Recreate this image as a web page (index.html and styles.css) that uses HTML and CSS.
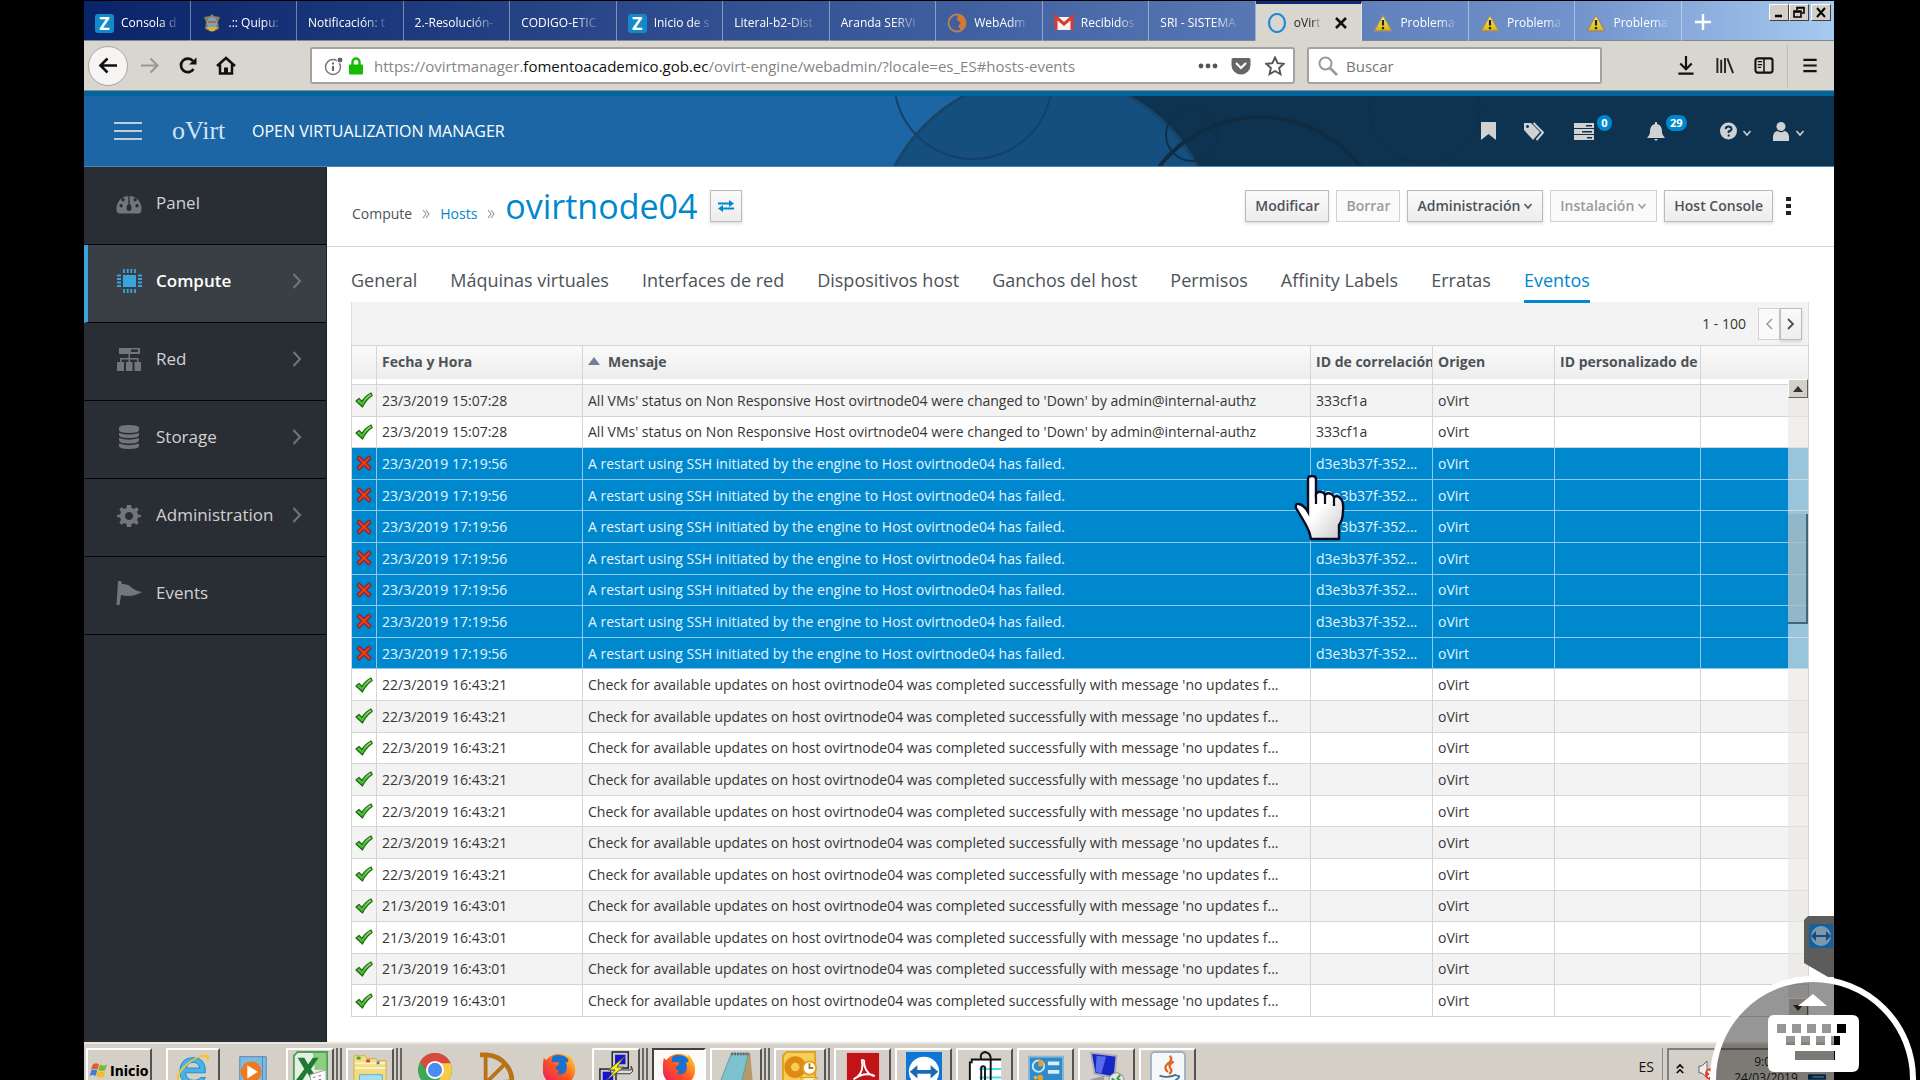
FILE: index.html
```html
<!DOCTYPE html>
<html lang="es">
<head>
<meta charset="utf-8">
<title>oVirt Open Virtualization Manager</title>
<link rel="stylesheet" href="styles.css">
</head>
<body>
<svg class="defs" aria-hidden="true">
  <defs>
    <linearGradient id="leaf" x1="0" y1="0" x2="0" y2="1"><stop offset="0" stop-color="#8fe66a"/><stop offset="1" stop-color="#2fb01a"/></linearGradient>
    <linearGradient id="hand" x1="0" y1="0" x2="1" y2="1"><stop offset=".5" stop-color="#fff"/><stop offset="1" stop-color="#c8c8c8"/></linearGradient>
    <linearGradient id="warnfill" x1="0" y1="0" x2="0" y2="1"><stop offset="0" stop-color="#fff27a"/><stop offset="1" stop-color="#e0b400"/></linearGradient>
    <linearGradient id="fox" x1="0" y1="1" x2="1" y2="0"><stop offset="0" stop-color="#e3126c"/><stop offset=".5" stop-color="#ff5a1f"/><stop offset="1" stop-color="#ffe22e"/></linearGradient>
    <symbol id="ok" viewBox="0 0 18 16"><path d="M1 9 L4 6.500 L7 9.500 C9 6 12 3 16 1 L17.200 3.500 C13 6 10 10 7.500 15 Z" fill="url(#leaf)" stroke="#1b6a12" stroke-width="1.200" stroke-linejoin="round"/></symbol>
    <symbol id="bad" viewBox="0 0 16 16"><path d="M3 1 L8 5.500 L13 1 L15 3.500 L10.500 8 L15 12.500 L13 15 L8 10.500 L3 15 L1 12.500 L5.500 8 L1 3.500 Z" fill="#f03a12" stroke="#7c2a3c" stroke-width="1.200" stroke-linejoin="round"/></symbol>
    <symbol id="warn" viewBox="0 0 20 18"><path d="M10 1 L19 17 H1 Z" fill="url(#warnfill)" stroke="#8f8b86" stroke-width="1.500" stroke-linejoin="round"/><path d="M10 6 V11.500 M10 13 V15.200" stroke="#222" stroke-width="2.200"/></symbol>
    <symbol id="chev" viewBox="0 0 10 16"><path d="M1.500 1 L8 8 L1.500 15" fill="none" stroke="#72767b" stroke-width="2"/></symbol>
    <symbol id="down" viewBox="0 0 10 8"><path d="M1.500 2 L5 6 L8.500 2" fill="none" stroke="currentColor" stroke-width="1.500"/></symbol>
    <symbol id="firefox" viewBox="0 0 38 38"><circle cx="19" cy="20" r="17" fill="url(#fox)"/><path d="M12 6 C18 2 30 5 31 14 C33 24 26 30 19 30 C11 30 8 24 10 17 Z" fill="#1b6fd0"/><path d="M3 7 C6 11 9 10 13 12 C16 11 20 12 19 14 C17 16 15 17 15 19 C19 20 20 22 17 24 C24 27 30 20 26 12 C31 13 29 4 27 2 C34 8 37 16 35 24 C31 38 10 39 4 27 C1 20 2 12 3 7 Z" fill="url(#fox)"/></symbol>
  </defs>
</svg>

<div class="window">
  <header class="tabstrip">
    <nav class="tabs" aria-label="Pestañas">
      <a class="tab" href="#"><span class="zicon">Z</span><span class="tabtext">Consola d</span></a>
      <a class="tab" href="#"><svg class="fav" viewBox="0 0 20 20"><path d="M2 4 L8 3 L10 1 L12 3 L18 4 L16 9 L17 16 L10 19 L3 16 L4 9 Z" fill="#8a7c58"/><ellipse cx="10" cy="10" rx="5" ry="6" fill="#6fa5c9"/><path d="M4 14 L16 14 L12 18 H8 Z" fill="#d9b23a"/><path d="M6 8 H14 V10 H6 Z" fill="#c7622f"/></svg><span class="tabtext">.:: Quipu:</span></a>
      <a class="tab" href="#"><span class="tabtext">Notificación: t</span></a>
      <a class="tab" href="#"><span class="tabtext">2.-Resolución-</span></a>
      <a class="tab" href="#"><span class="tabtext">CODIGO-ETIC</span></a>
      <a class="tab" href="#"><span class="zicon">Z</span><span class="tabtext">Inicio de s</span></a>
      <a class="tab" href="#"><span class="tabtext">Literal-b2-Dist</span></a>
      <a class="tab" href="#"><span class="tabtext">Aranda SERVI</span></a>
      <a class="tab" href="#"><svg class="fav" viewBox="0 0 20 20"><circle cx="10" cy="10" r="8.500" fill="none" stroke="#b9805a" stroke-width="1.800"/><path d="M11 2 L17 4 L19 11 L14 17 L11 13 L14 10 L10 7 Z" fill="#d9782c"/></svg><span class="tabtext">WebAdm</span></a>
      <a class="tab" href="#"><svg class="fav" viewBox="0 0 20 20"><path d="M2 4 H18 V17 H2 Z" fill="#f3f3f3"/><path d="M2 17 V4 L10 11 L18 4 V17" fill="none" stroke="#d63c30" stroke-width="3"/></svg><span class="tabtext">Recibidos</span></a>
      <a class="tab" href="#"><span class="tabtext">SRI - SISTEMA</span></a>
      <a class="tab active" href="#" aria-current="page"><svg class="fav" viewBox="0 0 20 20"><ellipse cx="10" cy="10" rx="8" ry="9" fill="none" stroke="#1b8bd0" stroke-width="2.200"/></svg><span class="tabtext">oVirt</span><svg class="tabclose" viewBox="0 0 14 14"><path d="M2 2 L12 12 M12 2 L2 12" stroke="#111" stroke-width="2.600"/></svg></a>
      <a class="tab" href="#"><svg class="fav"><use href="#warn"/></svg><span class="tabtext">Problema</span></a>
      <a class="tab" href="#"><svg class="fav"><use href="#warn"/></svg><span class="tabtext">Problema</span></a>
      <a class="tab" href="#"><svg class="fav"><use href="#warn"/></svg><span class="tabtext">Problema</span></a>
    </nav>
    <div class="strip-end">
      <button class="newtab" aria-label="Nueva pestaña"><svg viewBox="0 0 18 18"><path d="M9 1 V17 M1 9 H17" stroke="#fff" stroke-width="2.400"/></svg></button>
      <div class="wincontrols">
        <button aria-label="Minimizar"><svg viewBox="0 0 18 15"><path d="M5 11 H12" stroke="#000" stroke-width="2.500"/></svg></button>
        <button aria-label="Restaurar"><svg viewBox="0 0 18 15"><path d="M7 5 V2.500 H14 V8 H12 M4 6 H11 V12 H4 Z M4 7 H11 M7 3 H14" fill="none" stroke="#000" stroke-width="1.600"/></svg></button>
        <button class="wclose" aria-label="Cerrar"><svg viewBox="0 0 18 15"><path d="M5 3 L13 12 M13 3 L5 12" stroke="#000" stroke-width="2"/></svg></button>
      </div>
    </div>
  </header>

  <div class="toolbar">
    <button class="back" aria-label="Atrás"><svg viewBox="0 0 20 18"><path d="M19 9 H3 M9.500 2 L2.500 9 L9.500 16" fill="none" stroke="#111" stroke-width="2.600"/></svg></button>
    <button class="tool" aria-label="Adelante"><svg viewBox="0 0 20 18"><path d="M1 9 H17 M10.500 2 L17.500 9 L10.500 16" fill="none" stroke="#9a9893" stroke-width="2.200"/></svg></button>
    <button class="tool" aria-label="Recargar"><svg viewBox="0 0 20 18"><path d="M15.500 12.500 A6.800 6.800 0 1 1 15 4.500" fill="none" stroke="#111" stroke-width="2.700"/><path d="M18.500 1 V8 H11 Z" fill="#111"/></svg></button>
    <button class="tool" aria-label="Inicio"><svg viewBox="0 0 20 18"><path d="M1 9.500 L10 1.500 L19 9.500 M4 8 V17 H16 V8" fill="none" stroke="#111" stroke-width="2.500"/><path d="M8 11 H12 V17 H8 Z" fill="#111"/></svg></button>
    <div class="urlbox">
      <svg class="info" viewBox="0 0 20 20"><circle cx="9" cy="11" r="7.500" fill="none" stroke="#777" stroke-width="1.500"/><path d="M9 10 V15 M9 6.500 V8.500" stroke="#666" stroke-width="2"/><circle cx="16" cy="4" r="3" fill="#666" stroke="#fff"/></svg>
      <svg class="lock" viewBox="0 0 14 18"><path d="M3.500 9 V5 A3.500 3.500 0 0 1 10.500 5 V9" fill="none" stroke="#12bc00" stroke-width="2.400"/><rect y="7.500" width="14" height="10" rx="1" fill="#12bc00"/></svg>
      <div class="url" role="textbox" aria-label="Dirección" contenteditable="true" spellcheck="false">https://ovirtmanager.<b>fomentoacademico.gob.ec</b>/ovirt-engine/webadmin/?locale=es_ES#hosts-events</div>
      <svg class="dots" viewBox="0 0 20 6"><circle cx="3" cy="3" r="2.400"/><circle cx="10" cy="3" r="2.400"/><circle cx="17" cy="3" r="2.400"/></svg>
      <svg class="ic20" viewBox="0 0 20 20"><path d="M2 2 H18 Q19.500 2 19.500 4 V9 A9.500 9.500 0 0 1 .5 9 V4 Q.5 2 2 2 Z" fill="#666"/><path d="M5 7 L10 12 L15 7" fill="none" stroke="#fff" stroke-width="2.200"/></svg>
      <svg class="ic20" viewBox="0 0 20 20"><path d="M10 1.500 L12.600 7.200 L18.700 7.800 L14.100 12 L15.500 18.200 L10 15 L4.500 18.200 L5.900 12 L1.300 7.800 L7.400 7.200 Z" fill="none" stroke="#555" stroke-width="1.900"/></svg>
    </div>
    <label class="search">
      <svg class="ic20" viewBox="0 0 20 20"><circle cx="7.500" cy="7.500" r="6" fill="none" stroke="#999" stroke-width="2"/><path d="M12 12 L19 19" stroke="#999" stroke-width="2.600"/></svg>
      <input type="text" placeholder="Buscar" aria-label="Buscar">
    </label>
    <div class="righttools">
      <button class="tool" aria-label="Descargas"><svg viewBox="0 0 20 20"><path d="M10 0 V13 M4 8 L10 14 L16 8 M2 18.500 H18" fill="none" stroke="#111" stroke-width="2.300"/></svg></button>
      <button class="tool" aria-label="Biblioteca"><svg viewBox="0 0 20 20"><path d="M2 2 V18 M6 4 V18 M10 2 V18 M12.500 2.500 L18.500 18" fill="none" stroke="#222" stroke-width="2"/></svg></button>
      <button class="tool" aria-label="Barra lateral"><svg viewBox="0 0 20 20"><rect x="1" y="2.500" width="18" height="15" rx="2.500" fill="none" stroke="#111" stroke-width="2.200"/><path d="M10 3 V17" stroke="#111" stroke-width="1.600"/><path d="M3.500 6 H8 M3.500 9 H8 M3.500 12 H7" stroke="#111" stroke-width="1.300"/></svg></button>
      <button class="tool menu" aria-label="Menú"><svg viewBox="0 0 20 20"><path d="M3 4 H17 M3 10 H17 M3 16 H17" stroke="#111" stroke-width="2.300"/></svg></button>
    </div>
  </div>

  <header class="masthead">
    <svg class="deco" viewBox="0 0 1040 70" preserveAspectRatio="xMaxYMin slice" aria-hidden="true">
      <rect x="306" width="734" height="70" fill="#0d3350"/>
      <circle cx="252" cy="150" r="171" fill="#144f80" stroke="#174668" stroke-width="3"/>
      <g fill="none">
        <circle cx="179" cy="-16" r="79" stroke="#12426b" stroke-width="2"/>
        <circle cx="398" cy="39" r="26" stroke="#10304a" stroke-width="2"/>
        <circle cx="466" cy="148" r="127" stroke="#102c42" stroke-width="4"/>
        <circle cx="631" cy="12" r="55" stroke="#112f48" stroke-width="2"/>
      </g>
    </svg>
    <button class="burger" aria-label="Alternar navegación"><svg viewBox="0 0 28 20"><path d="M0 2 H28 M0 10 H28 M0 18 H28" stroke="#b9d0e4" stroke-width="2"/></svg></button>
    <a class="logo" href="#">oVirt</a>
    <span class="brand">OPEN VIRTUALIZATION MANAGER</span>
    <div class="mastactions">
      <button class="m-bookmark" aria-label="Marcadores"><svg width="15" height="18" viewBox="0 0 15 18"><path d="M0 0 H15 V18 L7.500 12 L0 18 Z"/></svg></button>
      <button class="m-tags" aria-label="Etiquetas"><svg width="21" height="19" viewBox="0 0 21 19"><path fill-rule="evenodd" d="M0 1 H7 L16 10 L9 18 L0 8 Z M3.500 3 A1.500 1.500 0 1 0 3.600 3 Z"/><path d="M9.500 1 L19 10.500 L12.500 18" fill="none" stroke="#d1d1d1" stroke-width="2"/></svg></button>
      <button class="m-count m-tasks" aria-label="Tareas"><svg width="20" height="17" viewBox="0 0 20 17"><path fill-rule="evenodd" d="M0 0 H20 V5 H0 Z M12 2 V3.500 H18 V2 Z M0 6 H20 V11 H0 Z M8 8 V9.500 H18 V8 Z M0 12 H20 V17 H0 Z M13 14 V15.500 H18 V14 Z"/></svg><span class="badge">0</span></button>
      <button class="m-count" aria-label="Notificaciones"><svg width="18" height="20" viewBox="0 0 18 20"><path d="M8 1 H10 V3 C14 4 15 7 15 11 C15 14 17 15 18 17 H0 C1 15 3 14 3 11 C3 7 4 4 8 3 Z M7 18 H11 Q9 21 7 18 Z"/></svg><span class="badge">29</span></button>
      <button class="m-menu" aria-label="Ayuda"><svg width="17" height="18" viewBox="0 0 17 18"><circle cx="8.500" cy="9" r="8.500"/><path d="M5.500 7 Q6 4.500 8.500 4.500 Q11.500 4.500 11.500 7 Q11.500 8.500 8.700 9.500 V11 M8.700 12.500 V14.500" fill="none" stroke="#0d3350" stroke-width="2"/></svg><svg class="caret"><use href="#down"/></svg></button>
      <button class="m-menu" aria-label="Usuario"><svg width="16" height="19" viewBox="0 0 16 19"><circle cx="8" cy="4.500" r="4.500"/><path d="M0 19 V14 Q1 9.500 4.500 9 Q8 11.500 11.500 9 Q15 9.500 16 14 V19 Z"/></svg><svg class="caret"><use href="#down"/></svg></button>
    </div>
  </header>

  <div class="app">
    <nav class="sidebar" aria-label="Principal">
      <a href="#"><svg viewBox="0 0 26 24"><path fill-rule="evenodd" d="M1 21 A12.500 12.500 0 1 1 25 21 Q24 22.500 22 22.500 H4 Q2 22.500 1 21 Z M5 13 A1.700 1.700 0 1 0 5.100 13 Z M7 7 A1.700 1.700 0 1 0 7.100 7 Z M21 13 A1.700 1.700 0 1 0 21.100 13 Z M19 7 A1.700 1.700 0 1 0 19.100 7 Z M12.300 5 V13 Q10.500 14 10.500 17 Q10.500 20 13 20 Q15.500 20 15.500 17 Q15.500 14 13.700 13 V5 Z"/></svg><span>Panel</span></a>
      <a class="current" href="#"><svg viewBox="0 0 26 24"><rect x="7" y="6" width="13" height="12"/><path d="M8 0 V4 M11.700 0 V4 M15.300 0 V4 M19 0 V4 M8 20 V24 M11.700 20 V24 M15.300 20 V24 M19 20 V24 M1 6.500 H5 M1 10 H5 M1 13.500 H5 M1 17 H5 M22 6.500 H26 M22 10 H26 M22 13.500 H26 M22 17 H26" stroke="#39a5dc" stroke-width="1.800"/></svg><span>Compute</span><svg class="chev"><use href="#chev"/></svg></a>
      <a href="#"><svg viewBox="0 0 26 24"><path fill-rule="evenodd" d="M3 1 H24 V7 H3 Z M15 2.500 V5 H22 V2.500 Z M12.500 7 H14 V11 H22.500 V15 H25 V24 H18.500 V15 H21 V12.500 H14 V15 H16.500 V24 H10 V15 H12.500 V12.500 H5.500 V15 H8 V24 H1 V15 H4 V11 H12.500 Z"/></svg><span>Red</span><svg class="chev"><use href="#chev"/></svg></a>
      <a href="#"><svg viewBox="0 0 26 24"><path d="M3 3 Q3 0 13 0 Q23 0 23 3 V5 Q23 8 13 8 Q3 8 3 5 Z M3 8 Q13 11 23 8 V10 Q23 13 13 13 Q3 13 3 10 Z M3 13 Q13 16.500 23 13 V15 Q23 18.500 13 18.500 Q3 18.500 3 15 Z M3 18.500 Q13 22 23 18.500 V21 Q23 24 13 24 Q3 24 3 21 Z"/></svg><span>Storage</span><svg class="chev"><use href="#chev"/></svg></a>
      <a href="#"><svg viewBox="0 0 26 24"><path fill-rule="evenodd" d="M11 2 H15 L15.600 5 L18 6 L20.600 4.300 L22.700 6.400 L21 9 L22 11.400 L25 12 V14 L22 14.600 L21 17 L22.700 19.600 L20.600 21.700 L18 20 L15.600 21 L15 24 H11 L10.400 21 L8 20 L5.400 21.700 L3.300 19.600 L5 17 L4 14.600 L1 14 V12 L4 11.400 L5 9 L3.300 6.400 L5.400 4.300 L8 6 L10.400 5 Z M13 9 A4 4 0 1 0 13.100 9 Z"/></svg><span>Administration</span><svg class="chev"><use href="#chev"/></svg></a>
      <a href="#"><svg viewBox="0 0 26 24"><path d="M2 0 L5 0 L6 3 Q13 3 16 7 Q20 10 26 11 Q16 17 5 14 L3.500 24 H.5 Z"/></svg><span>Events</span></a>
    </nav>

    <main>
      <div class="pagehead">
        <nav class="crumbs" aria-label="Ruta"><span>Compute</span><svg class="sep" viewBox="0 0 8 10"><path d="M1 1 L4 5 L1 9 M4 1 L7 5 L4 9" fill="none" stroke="#9c9c9c" stroke-width="1.200"/></svg><a href="#">Hosts</a><svg class="sep" viewBox="0 0 8 10"><path d="M1 1 L4 5 L1 9 M4 1 L7 5 L4 9" fill="none" stroke="#9c9c9c" stroke-width="1.200"/></svg><h1>ovirtnode04</h1></nav>
        <button class="btn swap" aria-label="Cambiar host"><svg viewBox="0 0 16 12"><path d="M0 3.500 H11 M16 8.500 H5" stroke="#0088ce" stroke-width="2"/><path d="M11 0 L16 3.500 L11 7 Z M5 5 L0 8.500 L5 12 Z" fill="#0088ce"/></svg></button>
        <div class="actions">
          <button class="btn">Modificar</button>
          <button class="btn" disabled>Borrar</button>
          <button class="btn">Administración<svg><use href="#down"/></svg></button>
          <button class="btn" disabled>Instalación<svg><use href="#down"/></svg></button>
          <button class="btn">Host Console</button>
          <button class="kebab" aria-label="Más acciones"><svg viewBox="0 0 5 18"><path d="M0 0 H5 V4 H0 Z M0 7 H5 V11 H0 Z M0 14 H5 V18 H0 Z"/></svg></button>
        </div>
      </div>

      <div class="content">
        <nav class="subtabs" aria-label="Detalles del host">
          <a href="#">General</a><a href="#">Máquinas virtuales</a><a href="#">Interfaces de red</a><a href="#">Dispositivos host</a><a href="#">Ganchos del host</a><a href="#">Permisos</a><a href="#">Affinity Labels</a><a href="#">Erratas</a><a class="on" href="#" aria-current="page">Eventos</a>
        </nav>
        <div class="pager"><span>1 - 100</span><div class="pages"><button class="btn" disabled aria-label="Anterior"><svg viewBox="0 0 8 12"><path d="M7 1 L2 6 L7 11" fill="none" stroke="currentColor" stroke-width="1.500"/></svg></button><button class="btn" aria-label="Siguiente"><svg viewBox="0 0 8 12"><path d="M1 1 L6 6 L1 11" fill="none" stroke="currentColor" stroke-width="1.800"/></svg></button></div></div>
        <div class="gridbox">
          <table>
            <colgroup><col class="c-icon"><col class="c-date"><col><col class="c-id"><col class="c-id"><col class="c-custom"><col class="c-rest"></colgroup>
            <thead><tr><th></th><th>Fecha y Hora</th><th><span class="asc"></span>Mensaje</th><th>ID de correlación</th><th>Origen</th><th>ID personalizado de</th><th></th></tr></thead>
            <tbody>
              <tr><td><svg><use href="#ok"/></svg></td><td>23/3/2019 15:07:28</td><td>All VMs' status on Non Responsive Host ovirtnode04 were changed to 'Down' by admin@internal-authz</td><td>333cf1a</td><td>oVirt</td><td></td><td></td></tr>
              <tr><td><svg><use href="#ok"/></svg></td><td>23/3/2019 15:07:28</td><td>All VMs' status on Non Responsive Host ovirtnode04 were changed to 'Down' by admin@internal-authz</td><td>333cf1a</td><td>oVirt</td><td></td><td></td></tr>
              <tr class="sel"><td><svg><use href="#bad"/></svg></td><td>23/3/2019 17:19:56</td><td>A restart using SSH initiated by the engine to Host ovirtnode04 has failed.</td><td>d3e3b37f-352...</td><td>oVirt</td><td></td><td></td></tr>
              <tr class="sel"><td><svg><use href="#bad"/></svg></td><td>23/3/2019 17:19:56</td><td>A restart using SSH initiated by the engine to Host ovirtnode04 has failed.</td><td>d3e3b37f-352...</td><td>oVirt</td><td></td><td></td></tr>
              <tr class="sel"><td><svg><use href="#bad"/></svg></td><td>23/3/2019 17:19:56</td><td>A restart using SSH initiated by the engine to Host ovirtnode04 has failed.</td><td>d3e3b37f-352...</td><td>oVirt</td><td></td><td></td></tr>
              <tr class="sel"><td><svg><use href="#bad"/></svg></td><td>23/3/2019 17:19:56</td><td>A restart using SSH initiated by the engine to Host ovirtnode04 has failed.</td><td>d3e3b37f-352...</td><td>oVirt</td><td></td><td></td></tr>
              <tr class="sel"><td><svg><use href="#bad"/></svg></td><td>23/3/2019 17:19:56</td><td>A restart using SSH initiated by the engine to Host ovirtnode04 has failed.</td><td>d3e3b37f-352...</td><td>oVirt</td><td></td><td></td></tr>
              <tr class="sel"><td><svg><use href="#bad"/></svg></td><td>23/3/2019 17:19:56</td><td>A restart using SSH initiated by the engine to Host ovirtnode04 has failed.</td><td>d3e3b37f-352...</td><td>oVirt</td><td></td><td></td></tr>
              <tr class="sel"><td><svg><use href="#bad"/></svg></td><td>23/3/2019 17:19:56</td><td>A restart using SSH initiated by the engine to Host ovirtnode04 has failed.</td><td>d3e3b37f-352...</td><td>oVirt</td><td></td><td></td></tr>
              <tr><td><svg><use href="#ok"/></svg></td><td>22/3/2019 16:43:21</td><td>Check for available updates on host ovirtnode04 was completed successfully with message 'no updates f...</td><td></td><td>oVirt</td><td></td><td></td></tr>
              <tr><td><svg><use href="#ok"/></svg></td><td>22/3/2019 16:43:21</td><td>Check for available updates on host ovirtnode04 was completed successfully with message 'no updates f...</td><td></td><td>oVirt</td><td></td><td></td></tr>
              <tr><td><svg><use href="#ok"/></svg></td><td>22/3/2019 16:43:21</td><td>Check for available updates on host ovirtnode04 was completed successfully with message 'no updates f...</td><td></td><td>oVirt</td><td></td><td></td></tr>
              <tr><td><svg><use href="#ok"/></svg></td><td>22/3/2019 16:43:21</td><td>Check for available updates on host ovirtnode04 was completed successfully with message 'no updates f...</td><td></td><td>oVirt</td><td></td><td></td></tr>
              <tr><td><svg><use href="#ok"/></svg></td><td>22/3/2019 16:43:21</td><td>Check for available updates on host ovirtnode04 was completed successfully with message 'no updates f...</td><td></td><td>oVirt</td><td></td><td></td></tr>
              <tr><td><svg><use href="#ok"/></svg></td><td>22/3/2019 16:43:21</td><td>Check for available updates on host ovirtnode04 was completed successfully with message 'no updates f...</td><td></td><td>oVirt</td><td></td><td></td></tr>
              <tr><td><svg><use href="#ok"/></svg></td><td>22/3/2019 16:43:21</td><td>Check for available updates on host ovirtnode04 was completed successfully with message 'no updates f...</td><td></td><td>oVirt</td><td></td><td></td></tr>
              <tr><td><svg><use href="#ok"/></svg></td><td>21/3/2019 16:43:01</td><td>Check for available updates on host ovirtnode04 was completed successfully with message 'no updates f...</td><td></td><td>oVirt</td><td></td><td></td></tr>
              <tr><td><svg><use href="#ok"/></svg></td><td>21/3/2019 16:43:01</td><td>Check for available updates on host ovirtnode04 was completed successfully with message 'no updates f...</td><td></td><td>oVirt</td><td></td><td></td></tr>
              <tr><td><svg><use href="#ok"/></svg></td><td>21/3/2019 16:43:01</td><td>Check for available updates on host ovirtnode04 was completed successfully with message 'no updates f...</td><td></td><td>oVirt</td><td></td><td></td></tr>
              <tr><td><svg><use href="#ok"/></svg></td><td>21/3/2019 16:43:01</td><td>Check for available updates on host ovirtnode04 was completed successfully with message 'no updates f...</td><td></td><td>oVirt</td><td></td><td></td></tr>
            </tbody>
          </table>
          <div class="scrollbar" aria-hidden="true"><span class="arrow"><svg viewBox="0 0 10 6"><path d="M0 6 L5 0 L10 6 Z" fill="#333"/></svg></span><span class="thumb"></span><span class="arrow last"><svg viewBox="0 0 10 6"><path d="M0 0 L5 6 L10 0 Z" fill="#333"/></svg></span></div>
        </div>
      </div>
    </main>
  </div>

  <footer class="taskbar">
    <button class="task start"><svg viewBox="0 0 20 20"><path d="M3 4 Q7 1 10 4 L8 10 Q5 7 1 10 Z" fill="#e8572a"/><path d="M11 4 Q15 6 19 4 L17 10 Q13 12 9 10 Z" fill="#7db832"/><path d="M1 11 Q5 8 8 11 L6 17 Q3 14 0 17 Z" fill="#3c7fd6"/><path d="M9 11 Q13 13 17 11 L15 18 Q11 19 7 17 Z" fill="#f4bc25"/></svg>Inicio</button>
    <button class="task w56" aria-label="Internet Explorer"><svg viewBox="0 0 38 38"><path d="M32 23 H11 Q12 31 20 31 Q25 31 27 28 H32 Q29 36 20 36 Q5 35 5 21 Q6 7 19 7 Q33 7 32 23 Z M12 18 H26 Q25 12 19 12 Q13 12 12 18 Z" fill="#45b4ea" fill-rule="evenodd" stroke="#2387c4"/><path d="M2 33 Q0 21 15 11 Q33 -1 36 6 Q37 8 34 12 Q35 6 29 6 Q18 8 8 20 Q2 28 5 33 Z" fill="#f4c531"/></svg></button>
    <button class="task flat" aria-label="Reproductor multimedia"><svg viewBox="0 0 38 38"><path d="M5 6 H33 V38 H5 Z" fill="#7fb9dd" stroke="#4c8ab8"/><path d="M29 6 V38" stroke="#4c8ab8"/><circle cx="17" cy="22" r="11" fill="#ee7a1d"/><path d="M13 15 L24 22 L13 29 Z" fill="#fff"/></svg></button>
    <button class="task stack w48" aria-label="Excel"><svg viewBox="0 0 38 38"><path d="M6 1 H37 V38 H2 V5 Z" fill="#e6f1e2" stroke="#4aa257" stroke-width="2"/><path d="M22 2 H36 V20 H24 Z" fill="#8ccf84"/><path d="M6 7 H13 L17 14 L22 7 H28 L20 19 L28 31 H21 L16 23 L11 31 H4 L13 19 Z" fill="#1f7a35"/><path d="M19 25 L36 20 V36 L21 38 Z" fill="#fff" stroke="#999"/><path d="M22 28 L34 25 M22 32 L34 29" stroke="#777" stroke-dasharray="3"/></svg></button>
    <button class="task stack w48" aria-label="Explorador"><svg viewBox="0 0 38 38"><path d="M2 5 H14 L16 8 H26 L27 10 H36 V38 H2 Z" fill="#f4dc85" stroke="#cfae4a"/><path d="M3 13 H35 M3 18 H35" stroke="#fff3bd" stroke-width="2"/><path d="M5 6 H9 V9 H5 Z" fill="#45a33c"/><path d="M15 9 H19 V12 H15 Z" fill="#c94432"/><path d="M26 11 H29 V14 H26 Z" fill="#3681c4"/><path d="M8 25 H32 V38 H8 Z" fill="#a5e0f2" stroke="#60aaca"/></svg></button>
    <button class="task flat" aria-label="Chrome"><svg viewBox="0 0 38 38"><circle cx="19" cy="20" r="18" fill="#3fa757"/><path d="M3.400 11 A18 18 0 0 1 34.600 11 L36 14 H19 L12 24 Z" fill="#d94a3e"/><path d="M35.500 13 A18 18 0 0 1 19 38 L27 24 L25 13 Z" fill="#f7cb47"/><circle cx="19" cy="20" r="8.500" fill="#4c8bf0" stroke="#fff" stroke-width="2"/></svg></button>
    <button class="task flat" aria-label="Rueda"><svg viewBox="0 0 38 38"><path d="M1 4 H8 A28 28 0 0 1 34 38" fill="none" stroke="#b87317" stroke-width="5"/><path d="M7 5 V38 M8 33 L28 13 M8 34 L33 32 M1 36 L12 30" stroke="#b87317" stroke-width="4"/></svg></button>
    <button class="task flat" aria-label="Firefox"><svg><use href="#firefox"/></svg></button>
    <button class="task stack w48" aria-label="PuTTY"><svg viewBox="0 0 38 38"><path d="M15 1 H32 V18 H15 Z M2 19 H19 V38 H2 Z" fill="#c9c9c9" stroke="#222" stroke-width="1.500"/><path d="M18 4 H29 V14 H18 Z M5 22 H16 V33 H5 Z" fill="#1414d2"/><path d="M13 20 H35 V16 L37 21 L34 24 H14 Z" fill="#ddd" stroke="#333"/><path d="M28 6 L11 20 H18 L9 31 L27 17 H20 Z" fill="#f6ee1e" stroke="#554"/></svg></button>
    <button class="task pressed w56" aria-label="Firefox abierto"><svg><use href="#firefox"/></svg></button>
    <button class="task stack w52" aria-label="Bloc de notas"><svg viewBox="0 0 38 38"><path d="M14 3 H34 L37 36 H6 Z" fill="#b59a66"/><path d="M14 3 H32 L24 36 H1 Z" fill="#7cc3cf" stroke="#5d9da8"/><path d="M14 3 H33" stroke="#666" stroke-width="3" stroke-dasharray="2 1"/></svg></button>
    <button class="task stack single w52" aria-label="Outlook"><svg viewBox="0 0 38 38"><path d="M5 1 H35 V38 H1 V5 Z" fill="#f6cd57" stroke="#e0a322" stroke-width="2"/><circle cx="14" cy="17" r="8" fill="none" stroke="#df8a13" stroke-width="7"/><circle cx="29" cy="18" r="7" fill="#fff" stroke="#e0a322" stroke-width="2"/><path d="M29 13 V18 H33" fill="none" stroke="#b67a13" stroke-width="2"/><path d="M20 28 H37 V38 H20 Z" fill="#fff0ad" stroke="#cf9820"/><path d="M20 28 L28 35 L37 28" fill="none" stroke="#cf9820"/></svg></button>
    <button class="task w58" aria-label="Acrobat"><svg viewBox="0 0 38 38"><rect x="2" y="2" width="34" height="36" fill="#c11318"/><path d="M9 30 Q20 24 18 12 Q17 8 20 10 Q20 22 29 26 Q33 27 28 25 Q18 23 9 30" fill="none" stroke="#fff" stroke-width="2"/></svg></button>
    <button class="task w58" aria-label="TeamViewer"><svg viewBox="0 0 38 38"><rect y="1" width="38" height="37" fill="#0d76d8"/><circle cx="19" cy="22" r="16" fill="#fff"/><path d="M4 22 L12 15 V20 H26 V15 L34 22 L26 29 V24 H12 V29 Z" fill="#1c68b5"/></svg></button>
    <button class="task w58" aria-label="Notas"><svg viewBox="0 0 38 38"><path d="M4 10 H36 V38 H4 Z" fill="#fff"/><path d="M13 19 H36 M13 28 H36" stroke="#3ae4ee" stroke-width="2"/><path d="M36 9 H5 V12 H3 V38 M15 38 V17 Q17 15 19 17 V38 M15 9 Q13 2 19 1 Q26 2 25 11 V38" fill="none" stroke="#111" stroke-width="2"/></svg></button>
    <button class="task w58" aria-label="Panel de control"><svg viewBox="0 0 38 38"><rect x="1" y="6" width="36" height="32" fill="#2e8ac9" stroke="#88b8d6" stroke-width="2"/><circle cx="11" cy="16" r="6" fill="none" stroke="#c9e7f8" stroke-width="2"/><path d="M11 16 V9 Q17 10 17 16 Z" fill="#f09a2c"/><path d="M21 13 H33 M21 22 H33" stroke="#d7eefa" stroke-width="4"/><circle cx="8" cy="28" r="2" fill="#e8b338"/><circle cx="13" cy="28" r="3" fill="#e8a32c"/><circle cx="19" cy="36" r="5" fill="#ccc"/></svg></button>
    <button class="task w58" aria-label="Escritorio remoto"><svg viewBox="0 0 38 38"><path d="M2 2 L29 5 L27 28 L6 24 Z" fill="#1626c4" stroke="#aab" stroke-width="2"/><path d="M8 5 L18 6 L13 24 L7 22 Z" fill="#586af0"/><path d="M1 30 L16 26 V34 Z" fill="#99a"/><circle cx="29" cy="31" r="8" fill="#e4e4e4" stroke="#888"/><path d="M24 29 L28 32 L25 36 M33 25 L30 29 L34 32" fill="none" stroke="#2c9b36" stroke-width="2"/></svg></button>
    <button class="task w58" aria-label="Java"><svg viewBox="0 0 38 38"><rect x="1" y="1" width="36" height="42" rx="4" fill="#f5f8fa" stroke="#9fb0bd" stroke-width="2"/><path d="M21 5 Q25 10 18 14 Q14 18 19 22 M25 11 Q18 15 22 19 Q24 22 20 24" fill="none" stroke="#e2661f" stroke-width="2.500"/><path d="M10 26 Q19 29 28 25 M12 31 Q19 34 27 31 M28 26 Q34 26 27 31 M11 36 Q19 39 28 35" fill="none" stroke="#44708f" stroke-width="2"/></svg></button>
    <span class="lang">ES</span>
    <div class="tray"><svg class="expand" viewBox="0 0 10 14"><path d="M1 6 L5 2 L9 6 M1 12 L5 8 L9 12" fill="none" stroke="#000" stroke-width="2"/></svg><svg class="vol" viewBox="0 0 18 20"><path d="M1 6 H4 L9 1 V18 L4 13 H1 Z" fill="#eee" stroke="#666"/><circle cx="13" cy="14" r="6" fill="#e33a2b"/><path d="M10 11 L16 17 M16 11 L10 17" stroke="#fff" stroke-width="2"/></svg><div class="clock"><span>9:03</span><span>24/03/2019</span></div><svg class="peek" viewBox="0 0 20 6"><path d="M0 0 H20 V6 H0 Z" fill="#123c66"/><path d="M5 3 H18" stroke="#5b9be0" stroke-width="2"/></svg></div>
  </footer>

  <svg class="pointer" viewBox="0 0 52 66" aria-hidden="true"><path d="M14 4 Q14 1 18 1 Q22 1 22 4 V19 Q24 16 27 17 Q30 17 31 20 Q34 17 37 19 Q39 20 40 22 Q44 20 46 23 Q50 26 49 36 Q49 45 45 50 V64 H17 Q16 57 12 50 Q8 43 2 33 Q1 28 5 29 Q10 30 14 37 Z" fill="url(#hand)" stroke="#0a0a24" stroke-width="2.400"/><path d="M22 18 V29 M31 20 V29 M40 22 V31" stroke="#0a0a24" stroke-width="2.200"/></svg>
  <div class="tvtab" aria-hidden="true"><svg viewBox="0 0 24 24"><rect width="24" height="24" fill="#14619f"/><circle cx="12" cy="12" r="10" fill="#7e98ab"/><path d="M2 12 L7 7 V11 H17 V7 L22 12 L17 17 V13 H7 V17 Z" fill="#174b82"/></svg></div>
</div>

<button class="keyboard" aria-label="Teclado"><svg viewBox="0 0 206 104"><circle cx="103" cy="103" r="100" fill="#000" fill-opacity=".41" stroke="#fff" stroke-width="6"/><path d="M88 30 L103 18 L117 30 Z" fill="#fff"/><path fill="#fff" fill-rule="evenodd" d="M64 39 H142 Q149 39 149 46 V89 Q149 96 142 96 H64 Q58 96 58 89 V46 Q58 39 64 39 Z M67 48 V57 H76 V48 Z M82 48 V57 H91 V48 Z M97 48 V57 H106 V48 Z M112 48 V57 H121 V48 Z M127 48 V57 H136 V48 Z M76 60 V69 H85 V60 Z M91 60 V69 H100 V60 Z M106 60 V69 H115 V60 Z M121 60 V69 H130 V60 Z M85 75 V84 H125 V75 Z"/></svg></button>
</body>
</html>
```

FILE: styles.css
```css
* { box-sizing: border-box; }
html { background: #000; }
body {
  margin: 0;
  height: 100vh;
  padding: 1px 86px 0 84px;
  overflow: hidden;
  position: relative;
  background: #000;
  color: #363636;
  font: 14px/20px "Open Sans", "Noto Sans", sans-serif;
}
a { color: inherit; text-decoration: none; }
button { margin: 0; padding: 0; border: 0; background: none; font: inherit; color: inherit; }
svg { display: block; flex: none; }
.defs { position: absolute; width: 0; height: 0; }

.window { position: relative; display: flex; flex-direction: column; height: 100%; background: #fff; }

/* browser tabs */
.tabstrip { display: flex; height: 40px; flex: none; background: linear-gradient(90deg, #0a246a, #3f5f9f 50%, #7292cb 85%, #a6caf0); border-bottom: 1px solid #7f8793; }
.tabs { display: flex; flex: 1; min-width: 0; }
.tab { display: flex; align-items: center; gap: 7px; flex: 1; min-width: 0; height: 40px; padding: 4px 6px 0 11px; border-right: 1px solid rgba(255,255,255,.4); color: #fff; font-size: 12px; }
.tab.active { background: #d9d6cf; color: #222; border-top: 3px solid #0c2a73; padding-top: 1px; }
.tabtext { white-space: nowrap; -webkit-mask-image: linear-gradient(90deg, #000 70%, rgba(0,0,0,.2)); mask-image: linear-gradient(90deg, #000 70%, rgba(0,0,0,.2)); }
.fav { width: 20px; height: 20px; }
.tabclose { width: 14px; height: 14px; margin: 0 7px 0 auto; }
.zicon { width: 19px; height: 19px; border-radius: 3px; background: #1489c8; font: bold 18px/19px "Open Sans", sans-serif; text-align: center; }
.strip-end { display: flex; width: 152px; padding: 3px 3px 0 12px; justify-content: space-between; }
.newtab { width: 18px; height: 36px; }
.newtab svg { width: 18px; height: 18px; }
.wincontrols { display: flex; }
.wincontrols button { width: 20px; height: 17px; background: #d4d0c8; border: 1px solid; border-color: #fff #404040 #404040 #fff; }
.wincontrols .wclose { margin-left: 2px; }

/* browser toolbar */
.toolbar { display: flex; align-items: center; flex: none; height: 50px; padding: 0 10px 0 4px; gap: 18px; background: #d9d6cf; border-bottom: 1px solid #8f8c86; font-size: 15px; }
.back { width: 40px; height: 40px; display: grid; place-items: center; border: 1px solid #a9a6a0; border-radius: 50%; background: #f6f5f3; }
.back svg, .tool svg { width: 20px; height: 19px; }
.back + .tool { margin-left: -6px; }
.urlbox { display: flex; align-items: center; flex: 1; height: 37px; margin-left: 56px; padding: 0 8px 0 12px; background: #fff; border: 2px solid #a5a29d; border-radius: 3px; }
.info { width: 20px; height: 20px; margin-right: 5px; }
.lock { width: 14px; height: 18px; margin-right: 11px; }
.url { flex: 1; white-space: nowrap; color: #858585; }
.url b { font-weight: 400; color: #111; }
.dots { width: 20px; height: 6px; fill: #555; margin-right: 13px; }
.ic20 { width: 20px; height: 20px; }
.ic20 + .ic20 { margin-left: 14px; }
.search { display: flex; align-items: center; gap: 8px; width: 295px; height: 37px; margin-left: -6px; padding: 0 9px; background: #fff; border: 2px solid #a5a29d; border-radius: 3px; }
.search input { flex: 1; min-width: 0; border: 0; padding: 0; font: inherit; outline: 0; }
.search input::placeholder { color: #757575; opacity: 1; }
.righttools { display: flex; gap: 19px; margin-left: 56px; align-items: center; }
.menu { height: 42px; padding: 0 4px 0 12px; border-left: 1px solid #bfbcb6; margin-left: -6px; }

/* masthead */
.masthead { position: relative; display: flex; align-items: center; flex: none; height: 76px; padding: 5px 29px 5px 30px; border-top: 5px solid #00659c; border-bottom: 1px solid #4e86a9; background: #1d66a5; color: #fff; overflow: hidden; }
.deco { position: absolute; top: 0; right: 0; width: 1040px; height: 70px; }
.masthead > :not(.deco) { position: relative; }
.burger svg { width: 28px; height: 20px; }
.logo { margin-left: 30px; width: 56px; font: 26px/30px "Liberation Serif", serif; color: #cfe3f4; }
.brand { margin-left: 24px; font-size: 16px; white-space: nowrap; }
.mastactions { display: flex; gap: 21px; margin-left: auto; color: #d1d1d1; fill: #d1d1d1; }
.mastactions button { position: relative; display: flex; align-items: center; height: 20px; }
.m-bookmark { width: 22px; }
.m-tags { width: 29px; }
.m-count { width: 52px; }
.m-menu { width: 32px; justify-content: space-between; }
.caret { width: 10px; height: 8px; margin-top: 4px; }
.badge { position: absolute; left: 19px; top: -6px; min-width: 15px; height: 16px; padding: 0 4px; border-radius: 8px; background: #0088ce; color: #fff; font: bold 11px/16px "Open Sans", sans-serif; text-align: center; }
.m-tasks .badge { left: 23px; }

/* layout */
.app { display: flex; flex: 1; min-height: 0; }
.sidebar { flex: none; width: 243px; background: #292e34; color: #d1d1d1; font-size: 17px; border-right: 1px solid #1b1e22; }
.sidebar a { display: flex; align-items: center; height: 78px; padding: 0 24px 6px 32px; border-bottom: 1px solid #050505; }
.sidebar a > svg { width: 26px; height: 24px; margin-right: 14px; fill: #72767b; }
.sidebar a > .chev { width: 10px; height: 18px; margin: 0 0 0 auto; }
.sidebar .current { background: #393f44; color: #fff; font-weight: 600; border-left: 4px solid #39a5dc; padding-left: 28px; }
.sidebar .current > svg:first-child { fill: #39a5dc; }
main { flex: 1; min-width: 0; }

/* page heading */
.pagehead { display: flex; align-items: center; height: 80px; padding: 0 43px 2px 25px; border-bottom: 1px solid #d5d5d5; }
.crumbs { display: flex; align-items: baseline; color: #4d5258; }
.crumbs a { color: #0088ce; }
.sep { width: 8px; height: 10px; margin: 0 10px; }
h1 { margin: 0; font-size: 34px; line-height: 46px; font-weight: 400; color: #0088ce; }
.btn { display: flex; align-items: center; justify-content: center; gap: 3px; height: 32px; padding: 0 9px; border: 1px solid #bbb; background: linear-gradient(#fafafa, #ededed); box-shadow: 0 2px 3px rgba(3,3,3,.12); color: #4d5258; font-weight: 600; white-space: nowrap; }
.btn:disabled { background: #fafafa; border-color: #d1d1d1; box-shadow: none; color: #999b9d; }
.btn svg { width: 10px; height: 8px; }
.swap { width: 32px; margin-left: 13px; padding: 0; }
.swap svg { width: 16px; height: 12px; }
.actions { display: flex; align-items: center; gap: 7px; margin-left: auto; }
.kebab { margin-left: 6px; }
.kebab svg { width: 5px; height: 18px; fill: #222; }

/* detail tabs and grid */
.content { padding: 11px 25px 0 24px; }
.subtabs { display: flex; gap: 33px; height: 44px; font-size: 18px; color: #4d5258; position: relative; }
.subtabs a { height: 45px; line-height: 44px; white-space: nowrap; }
.subtabs .on { color: #0088ce; border-bottom: 3px solid #0088ce; }
.pager { display: flex; align-items: center; justify-content: flex-end; gap: 12px; height: 43px; padding-right: 6px; background: #f3f3f3; border: 1px solid #ddd; border-top: 0; border-bottom: 0; }
.pages { display: flex; }
.pages .btn { width: 22px; padding: 0; }
.pages .btn svg { width: 8px; height: 12px; }
.gridbox { display: grid; border: 1px solid #d5d5d5; border-bottom: 0; }
.gridbox > * { grid-area: 1 / 1; }
table { width: 100%; height: 671px; table-layout: fixed; border-collapse: separate; border-spacing: 0; }
.c-icon { width: 25px; }
.c-date { width: 206px; }
.c-id { width: 122px; }
.c-custom { width: 146px; }
.c-rest { width: 107px; }
th, td { padding: 0 0 0 5px; border-right: 1px solid #d5d5d5; border-bottom: 1px solid #d5d5d5; text-align: left; white-space: nowrap; overflow: hidden; }
th:last-child, td:last-child { border-right: 0; }
th { height: 39px; padding-bottom: 6px; font-weight: 700; color: #4d5258; background: linear-gradient(#fafafa, #ededed) 0 0 / 100% 33px no-repeat; }
td { line-height: 29px; }
td:first-child { padding: 0 0 0 3px; }
td svg { width: 18px; height: 16px; }
tbody tr:nth-child(odd) { background: #f3f3f3; }
tbody .sel:nth-child(n) { background: #0088ce; color: #e4f5ff; }
.sel td { border-color: #8cc9ec; }
.asc { display: inline-block; margin: 0 8px 2px 0; border: 6px solid transparent; border-top: 0; border-bottom: 8px solid #72809a; }
.scrollbar { position: relative; display: flex; flex-direction: column; justify-self: end; width: 20px; margin-top: 33px; background: rgba(233,231,226,.65); }
.arrow { display: grid; place-items: center; height: 19px; background: #d4d0c8; border: 1px solid; border-color: #fff #606060 #606060 #fff; }
.arrow svg { width: 10px; height: 6px; }
.thumb { height: 110px; margin-top: 116px; background: rgba(140,170,180,.5); border: solid rgba(45,80,105,.8); border-width: 0 2px 2px 0; }
.last { margin-top: auto; }

/* desktop taskbar */
.taskbar { display: flex; flex: none; align-items: flex-start; gap: 4px; height: 38px; padding: 4px 0 0 2px; overflow: hidden; background: #d4d0c8; border-top: 2px solid #e9e6e0; }
.task { display: grid; place-items: center; flex: none; height: 42px; border: 2px solid; border-color: #fff #55534f #55534f #fff; }
.task svg { width: 36px; height: 38px; }
.w48 { width: 48px; }
.w52 { width: 52px; }
.w56 { width: 54px; }
.w58 { width: 57px; }
.flat { border-color: transparent; width: 58px; }
.stack { margin-right: 8px; box-shadow: 2px 0 #d4d0c8, 4px 0 #666, 6px 0 #d4d0c8, 8px 0 #666; }
.single { margin-right: 4px; box-shadow: 2px 0 #d4d0c8, 4px 0 #666; }
.pressed { background: #fbfbfa; border-color: #404040 #fff #fff #404040; }
.start { display: flex; align-items: flex-start; width: 66px; margin-right: 10px; padding: 10px 3px 0 2px; gap: 2px; color: #000; font: bold 14px/22px "DejaVu Sans Condensed", sans-serif; }
.start svg { width: 18px; height: 20px; }
.lang { margin-left: auto; padding: 9px 8px 0 0; border-right: 1px solid #888; height: 40px; font-size: 14px; color: #111; }
.tray { display: flex; width: 167px; height: 44px; padding: 4px 0 0 7px; border: solid #808080; border-width: 2px 0 0 2px; }
.expand { width: 8px; height: 14px; margin-top: 8px; }
.vol { width: 18px; height: 20px; margin: 6px 0 0 14px; }
.clock { display: flex; flex-direction: column; align-items: center; width: 72px; margin-left: 14px; color: #222; line-height: 16px; font-size: 12px; }
.peek { width: 18px; height: 6px; margin: 20px 0 0 6px; }

/* overlays */
.pointer { position: absolute; left: 1210px; top: 474px; width: 52px; height: 66px; }
.tvtab { position: absolute; right: 0; top: 915px; width: 30px; height: 61px; padding: 8px 0 0 5px; background: #5c5c5c; clip-path: polygon(0 4px, 4px 0, 100% 0, 100% 100%, 24px 100%, 0 47px); }
.tvtab svg { width: 24px; height: 24px; }
.keyboard { position: absolute; right: 4px; bottom: 0; }
.keyboard svg { width: 206px; height: 104px; }
```
